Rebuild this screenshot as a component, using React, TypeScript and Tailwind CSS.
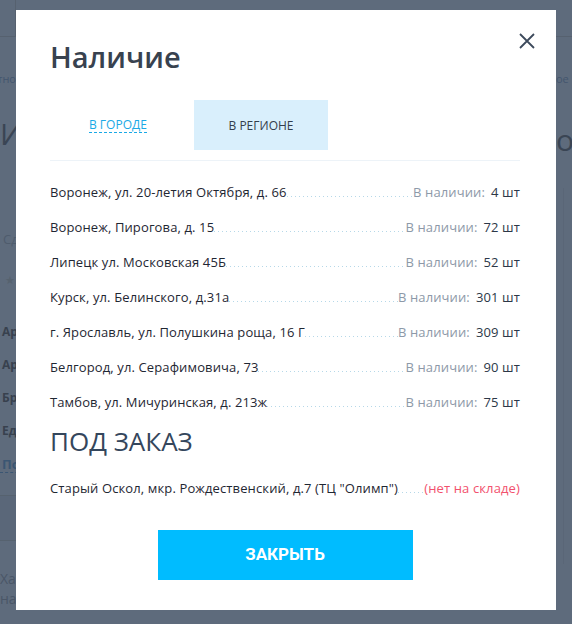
import React from 'react';

type Store = { address: string; count?: string; status?: string };

const inCity: Store[] = [
  { address: 'Воронеж, ул. 20-летия Октября, д. 66', count: '4 шт' },
  { address: 'Воронеж, Пирогова, д. 15', count: '72 шт' },
  { address: 'Липецк ул. Московская 45Б', count: '52 шт' },
  { address: 'Курск, ул. Белинского, д.31а', count: '301 шт' },
  { address: 'г. Ярославль, ул. Полушкина роща, 16 Г', count: '309 шт' },
  { address: 'Белгород, ул. Серафимовича, 73', count: '90 шт' },
  { address: 'Тамбов, ул. Мичуринская, д. 213ж', count: '75 шт' },
];

const onOrder: Store[] = [
  { address: 'Старый Оскол, мкр. Рождественский, д.7 (ТЦ "Олимп")', status: '(нет на складе)' },
];

const font = { fontFamily: '"Open Sans", "Noto Sans", sans-serif' };

const StoreRow: React.FC<{ store: Store }> = ({ store }) => (
  <div className="flex items-end h-[35px] pb-[11px] text-[13px] leading-[16px] tracking-[0.12px]">
    <span className="text-[#1f2733] whitespace-nowrap">{store.address}</span>
    {/* точки-заполнитель */}
    <span className="flex-1 h-px mb-[3px] bg-[linear-gradient(to_right,#b6d8e8_1px,transparent_1px)] bg-[length:4px_1px] bg-repeat-x" />
    {store.count ? (
      <>
        <span className="text-[#8d99a8] whitespace-nowrap">В наличии:</span>
        <span className="ml-[6px] text-[#2c3848] whitespace-nowrap">{store.count}</span>
      </>
    ) : (
      <span className="text-[#f2516d] whitespace-nowrap">{store.status}</span>
    )}
  </div>
);

const Background: React.FC = () => (
  <div className="flex w-full h-full" style={font}>
    {/* левая полоска страницы */}
    <div className="w-[16px] overflow-hidden flex flex-col">
      <div className="h-[37px] border-b border-r border-[#56616f]" />
      <div className="flex justify-end mt-[35px] text-[11px] leading-[14px] text-[#44566e] whitespace-nowrap">Бесплатно</div>
      <div className="mt-[30px] text-[30px] leading-[36px] text-[#3a4554] whitespace-nowrap">Информация</div>
      <div className="mt-[79px] pl-[3px] text-[13px] leading-[16px] text-[#4f5c6d] whitespace-nowrap">Сдать</div>
      <div className="mt-[26px] pl-[5px] text-[11px] leading-[14px] text-[#56626f]">★</div>
      <div className="mt-[37px] pl-[2px] flex flex-col gap-[17px] text-[12px] leading-[16px] font-bold text-[#38414e] whitespace-nowrap">
        <span>Артикул</span>
        <span>Артикул</span>
        <span>Бренд</span>
        <span>Единица</span>
      </div>
      <div className="mt-[17px] pl-[2px] text-[13px] leading-[16px] font-bold text-[#3b5673] whitespace-nowrap border-b border-dashed border-[#3b5673] w-[80px]">Подробнее</div>
      <div className="mt-[22px] h-[46px] bg-[#5a6779] border-y border-[#56626f]" />
      <div className="mt-[28px] flex flex-col text-[14px] leading-[20px] text-[#4a5667] whitespace-nowrap">
        <span>Характеристики</span>
        <span>наличие</span>
      </div>
    </div>
    <div className="flex-1 flex flex-col">
      <div className="h-[37px] border-b border-[#56616f]" />
    </div>
    {/* правая полоска страницы */}
    <div className="w-[16px] overflow-hidden flex flex-col">
      <div className="h-[37px] border-b border-[#56616f]" />
      <div className="mt-[35px] text-[11px] leading-[14px] text-[#44566e] whitespace-nowrap">ое</div>
      <div className="mt-[36px] text-[30px] leading-[36px] text-[#3a4554] whitespace-nowrap">ог</div>
      <div className="mt-[30px] ml-[7px] flex-1 border-l border-[#5a6677] mb-[60px]" />
    </div>
  </div>
);

const App: React.FC = () => {
  return (
    <div className="relative w-[572px] h-[624px] bg-[#5e6b7c] overflow-hidden">
      <Background />

      {/* модальное окно */}
      <div
        className="absolute left-[16px] top-[10px] w-[540px] h-[600px] bg-white pl-[34px] pr-[36px] pt-[27px] pb-[30px] flex flex-col"
        style={font}
      >
        <button className="absolute right-[21px] top-[23px] w-[16px] h-[16px] text-[#3d4a5c]">
          <svg viewBox="0 0 16 16" width="16" height="16" fill="none" stroke="currentColor" strokeWidth="1.8">
            <path d="M1 1 L15 15 M15 1 L1 15" />
          </svg>
        </button>

        <h2 className="text-[29px] leading-[40px] font-semibold text-[#38424f]">Наличие</h2>

        {/* вкладки */}
        <div className="mt-[23px] flex h-[50px]">
          <div className="w-[144px] pl-[39px] flex items-center">
            <span className="text-[12px] leading-[15px] text-[#1aa9e6] border-b border-dashed border-[#1aa9e6]">В ГОРОДЕ</span>
          </div>
          <div className="w-[134px] bg-[#d9effc] flex items-center justify-center">
            <span className="text-[12px] leading-[15px] text-[#333e4c]">В РЕГИОНЕ</span>
          </div>
        </div>
        <div className="mt-[10px] h-px bg-[#edf3f8]" />

        <div className="mt-[15px] flex flex-col">
          {inCity.map((s) => (
            <StoreRow key={s.address} store={s} />
          ))}
        </div>

        <h3 className="-mt-[2px] text-[26px] leading-[44px] text-[#34465c]">ПОД ЗАКАЗ</h3>

        <div className="mt-[9px] flex flex-col">
          {onOrder.map((s) => (
            <StoreRow key={s.address} store={s} />
          ))}
        </div>

        <div className="mt-auto flex justify-center">
          <button
            className="w-[255px] h-[50px] bg-[#00bcff] text-white text-[17px] font-bold"
            style={{ fontFamily: 'Roboto, "Liberation Sans", sans-serif' }}
          >
            ЗАКРЫТЬ
          </button>
        </div>
      </div>
    </div>
  );
};

export default App;
